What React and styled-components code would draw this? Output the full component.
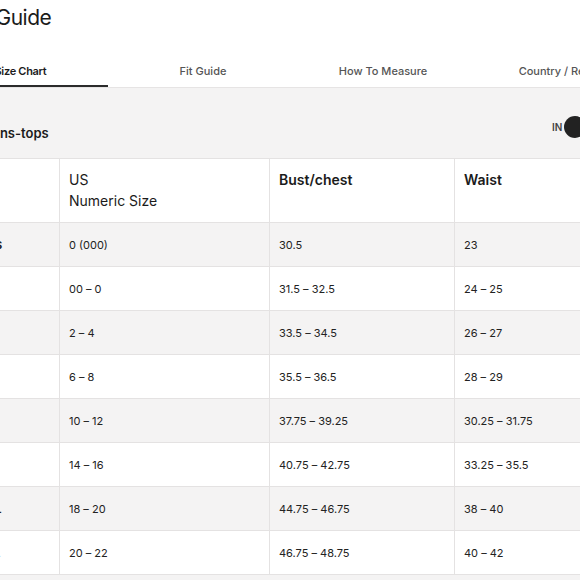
import React, { useState } from "react";
import styled, { createGlobalStyle } from "styled-components";

const GlobalStyle = createGlobalStyle`
  html, body {
    margin: 0;
    padding: 0;
    background: #fff;
    overflow: hidden;
  }
  body {
    font-family: Inter, "Liberation Sans", sans-serif;
    color: #1b1b1b;
  }
`;

// the modal is wider than the window, we only see a slice of it
const Page = styled.div`
  width: 760px;
  margin-left: -100px;
`;

const Title = styled.h1`
  margin: 4px 0 0 50px;
  font-size: 21px;
  font-weight: 400;
  line-height: 28px;
  letter-spacing: -0.5px;
`;

const TabBar = styled.div`
  display: grid;
  grid-template-columns: repeat(4, 180px);
  padding-left: 33px;
  margin-top: 23px;
  border-bottom: 1px solid #e6e4e4;
`;

const Tab = styled.button`
  border: none;
  background: none;
  font-family: inherit;
  font-size: 11px;
  line-height: 14px;
  letter-spacing: ${(p) => (p.$active ? "-0.3px" : "0")};
  font-weight: ${(p) => (p.$active ? 600 : 500)};
  color: ${(p) => (p.$active ? "#1b1b1b" : "#555")};
  padding: 9px 0 7px;
  margin-right: ${(p) => (p.$active ? "5px" : "0")};
  border-bottom: 2px solid ${(p) => (p.$active ? "#2b2b2b" : "transparent")};
  cursor: pointer;
`;

const Panel = styled.section`
  background: #f4f3f3;
  padding: 0 33px 40px 60px;
`;

const PanelHead = styled.div`
  display: flex;
  justify-content: space-between;
  align-items: flex-start;
  height: 70px;
  padding-top: 28px;
  box-sizing: border-box;
`;

const Heading = styled.h2`
  margin: 9px 0 0;
  font-size: 13px;
  line-height: 16px;
  font-weight: 600;
`;

const UnitToggle = styled.div`
  display: flex;
  align-items: center;
  gap: 2px;
  font-size: 10px;
  font-weight: 600;
  color: #444;
`;

const Track = styled.button`
  display: flex;
  justify-content: ${(p) => (p.$on ? "flex-end" : "flex-start")};
  width: 44px;
  height: 22px;
  padding: 0;
  border: none;
  border-radius: 11px;
  background: #fff;
  cursor: pointer;
`;

const Knob = styled.span`
  width: 22px;
  height: 22px;
  border-radius: 50%;
  background: #222;
`;

const Table = styled.table`
  width: 855px;
  margin-left: 9px;
  border-collapse: collapse;
  table-layout: fixed;
  background: #fff;
`;

const Th = styled.th`
  width: ${(p) => p.w}px;
  height: 64px;
  box-sizing: border-box;
  padding: 10px 9px 0;
  border: 1px solid #e4e2e2;
  text-align: left;
  vertical-align: top;
  font-size: 14px;
  line-height: 21px;
  font-weight: ${(p) => (p.$bold ? 600 : 400)};
`;

const Row = styled.tr`
  background: ${(p) => (p.$shaded ? "#f4f3f3" : "#fff")};
`;

const Td = styled.td`
  height: 43px;
  padding: 0 9px;
  border: 1px solid #e4e2e2;
  font-size: 11px;
  font-weight: ${(p) => (p.$bold ? 700 : 400)};
  color: #222;
  white-space: nowrap;
  overflow: hidden;
`;

const tabs = ["Size Chart", "Fit Guide", "How To Measure", "Country / Region"];

const rows = [
  ["XXS", "0 (000)", "30.5", "23", "33"],
  ["XS", "00 – 0", "31.5 – 32.5", "24 – 25", "34 – 35"],
  ["S", "2 – 4", "33.5 – 34.5", "26 – 27", "36 – 37"],
  ["M", "6 – 8", "35.5 – 36.5", "28 – 29", "38 – 39"],
  ["L", "10 – 12", "37.75 – 39.25", "30.25 – 31.75", "40.25 – 41.75"],
  ["XL", "14 – 16", "40.75 – 42.75", "33.25 – 35.5", "43.25 – 45.5"],
  ["XXL", "18 – 20", "44.75 – 46.75", "38 – 40", "48 – 50"],
  ["3XL", "20 – 22", "46.75 – 48.75", "40 – 42", "50 – 52"],
];

export default function App() {
  const [tab, setTab] = useState(0);
  const [cm, setCm] = useState(false);

  return (
    <Page>
      <GlobalStyle />
      <Title>Size Guide</Title>
      <TabBar>
        {tabs.map((t, i) => (
          <Tab key={t} $active={tab === i} onClick={() => setTab(i)}>
            {t}
          </Tab>
        ))}
      </TabBar>
      <Panel>
        <PanelHead>
          <Heading>Womens-tops</Heading>
          <UnitToggle>
            IN
            <Track $on={cm} onClick={() => setCm(!cm)}>
              <Knob />
            </Track>
            CM
          </UnitToggle>
        </PanelHead>
        <Table>
          <thead>
            <tr>
              <Th w={90}></Th>
              <Th w={210}>
                US
                <br />
                Numeric Size
              </Th>
              <Th w={185} $bold>
                Bust/chest
              </Th>
              <Th w={185} $bold>
                Waist
              </Th>
              <Th w={185} $bold>
                Hips
              </Th>
            </tr>
          </thead>
          <tbody>
            {rows.map((r, i) => (
              <Row key={r[0]} $shaded={i % 2 === 0}>
                {r.map((c, j) => (
                  <Td key={j} $bold={j === 0}>
                    {c}
                  </Td>
                ))}
              </Row>
            ))}
          </tbody>
        </Table>
      </Panel>
    </Page>
  );
}
